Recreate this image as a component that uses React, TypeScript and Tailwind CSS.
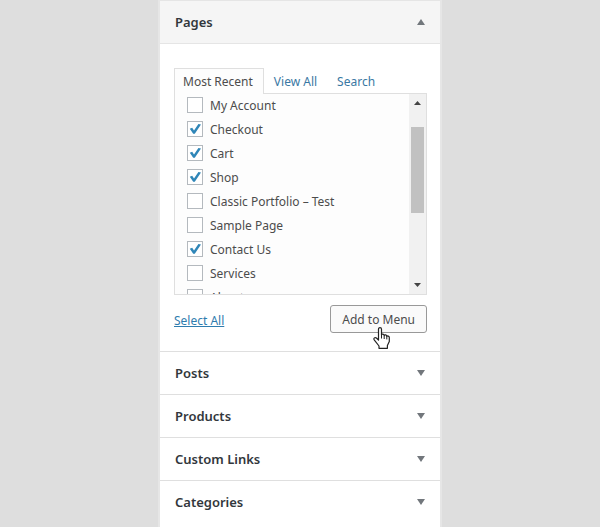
import { useState } from "react";

interface PageItem {
  name: string;
  checked: boolean;
}

const PAGES: PageItem[] = [
  { name: "My Account", checked: false },
  { name: "Checkout", checked: true },
  { name: "Cart", checked: true },
  { name: "Shop", checked: true },
  { name: "Classic Portfolio – Test", checked: false },
  { name: "Sample Page", checked: false },
  { name: "Contact Us", checked: true },
  { name: "Services", checked: false },
  { name: "About", checked: false },
];

const SECTIONS = ["Posts", "Products", "Custom Links", "Categories"];

function Triangle({ up = false, className = "w-2 h-1.5" }: { up?: boolean; className?: string }) {
  return (
    <svg viewBox="0 0 8 6" preserveAspectRatio="none" className={`block ${className}`} aria-hidden="true">
      <path d={up ? "M4 0L8 6H0z" : "M0 0H8L4 6z"} fill="currentColor" />
    </svg>
  );
}

function PageCheckbox({ name, checked, onToggle }: PageItem & { onToggle: () => void }) {
  return (
    <li>
      <label className="flex items-center gap-[7px] h-6 whitespace-nowrap">
        <span className="grid w-4 h-4 shrink-0">
          <input
            type="checkbox"
            checked={checked}
            onChange={onToggle}
            className="col-start-1 row-start-1 appearance-none w-4 h-4 bg-white border border-[#b4b9be]"
          />
          {checked && (
            <svg
              viewBox="0 0 16 16"
              className="col-start-1 row-start-1 w-4 h-4 pointer-events-none"
              aria-hidden="true"
            >
              <path d="M2.8 7.8L5.2 6.8L7 9.4L11.4 3L14 3.6L7.8 12.8H6.2z" fill="#2f86b8" />
            </svg>
          )}
        </span>
        <span className="pt-0.5">{name}</span>
      </label>
    </li>
  );
}

function ScrollBar() {
  return (
    <div className="flex flex-col items-center w-[17px] shrink-0 bg-[#f1f1f1] text-[#444]" aria-hidden="true">
      <Triangle up className="w-[7px] h-1 mt-[7px] mb-[22px]" />
      <div className="w-[13px] h-[86px] bg-[#c1c1c1]" />
      <Triangle className="w-[7px] h-1 mt-auto mb-[7px]" />
    </div>
  );
}

function HandCursor() {
  return (
    <svg
      viewBox="0 0 17 22"
      className="absolute left-[43px] top-[22px] w-[17px] h-[22px] pointer-events-none"
      aria-hidden="true"
    >
      <path
        d="M5.5 13V2.2C5.5 .1 8.5 .1 8.5 2.2V8C8.7 6.6 11.2 6.8 11.2 8.6C11.6 7.4 13.8 7.8 13.8 9.4C14.4 8.6 16.3 9 16.3 10.6V14.6L14.4 18.4V21.3H6V19L1.2 12.8C.2 11.2 2 9.9 3.4 11z"
        fill="#fff"
        stroke="#222"
        strokeWidth="1.2"
        strokeLinejoin="round"
      />
      <path d="M8.5 8V11.5M11.2 8.6V12M13.8 9.4V12.4" stroke="#222" strokeWidth="1" />
    </svg>
  );
}

export default function App() {
  const [pages, setPages] = useState(PAGES);

  const toggle = (name: string) =>
    setPages(pages.map((p) => (p.name === name ? { ...p, checked: !p.checked } : p)));

  const selectAll = () => setPages(pages.map((p) => ({ ...p, checked: true })));

  return (
    <div className="min-h-screen bg-[#dedede] font-['Noto_Sans',sans-serif] text-xs leading-5 text-[#4c4c4c]">
      <main className="w-full max-w-[284px] min-h-screen mx-auto bg-white border-x-2 border-[#e6e6e6]">
        <section className="border-t border-[#e5e5e5]">
          <h2 className="border-b border-[#e5e5e5] bg-[#f5f5f5]">
            <button
              type="button"
              aria-expanded="true"
              className="flex items-center justify-between w-full h-[42px] px-[15px] text-[13px] font-semibold text-[#32373c]"
            >
              Pages
              <Triangle up className="w-2 h-1.5 text-[#72777c]" />
            </button>
          </h2>

          <div className="pl-3.5 pr-[13px] pt-6 pb-[18px]">
            <div role="tablist" className="flex">
              <button
                type="button"
                role="tab"
                aria-selected="true"
                className="relative z-10 -mb-px h-[26px] pl-2 pr-2.5 pt-px border border-b-0 border-[#dfdfdf] bg-[#fdfdfd] whitespace-nowrap"
              >
                Most Recent
              </button>
              <button type="button" role="tab" aria-selected="false" className="px-2.5 pt-0.5 text-[#3a78a3] whitespace-nowrap">
                View All
              </button>
              <button type="button" role="tab" aria-selected="false" className="px-2.5 pt-0.5 text-[#3a78a3]">
                Search
              </button>
            </div>

            <div className="flex h-[202px] border border-[#dfdfdf] bg-[#fdfdfd] overflow-hidden">
              <ul className="flex-1 min-w-0 -mt-px pl-3">
                {pages.map((page) => (
                  <PageCheckbox key={page.name} {...page} onToggle={() => toggle(page.name)} />
                ))}
              </ul>
              <ScrollBar />
            </div>

            <div className="flex items-center justify-between mt-2.5">
              <a
                href="#select-all"
                onClick={(e) => {
                  e.preventDefault();
                  selectAll();
                }}
                className="pt-1 text-[#2f7cae] underline"
              >
                Select All
              </a>
              <div className="relative">
                <button
                  type="button"
                  className="block h-7 px-[11px] pt-0.5 bg-[#fafafa] border border-[#999] rounded-[3px] whitespace-nowrap"
                >
                  Add to Menu
                </button>
                <HandCursor />
              </div>
            </div>
          </div>
        </section>

        {SECTIONS.map((title) => (
          <h2 key={title} className="border-t border-[#dfdfdf]">
            <button
              type="button"
              aria-expanded="false"
              className="flex items-center justify-between w-full h-[42px] px-[15px] text-[13px] font-semibold text-[#32373c]"
            >
              {title}
              <Triangle className="w-2 h-1.5 text-[#72777c]" />
            </button>
          </h2>
        ))}
      </main>
    </div>
  );
}
